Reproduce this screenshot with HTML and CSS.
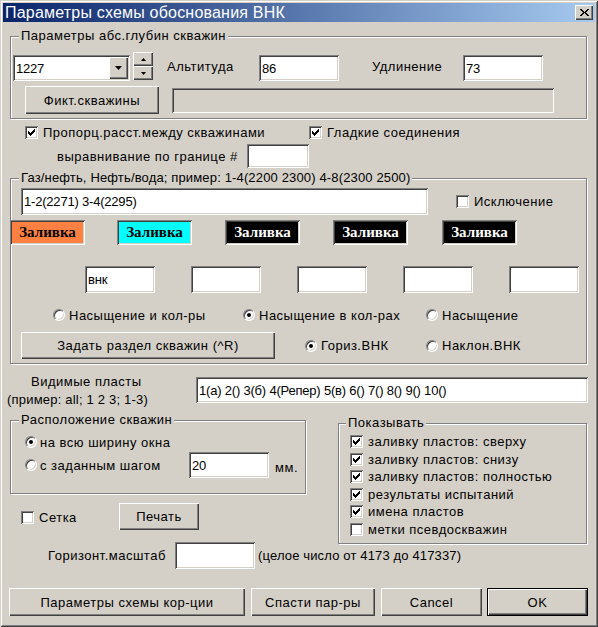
FILE: index.html
```html
<!DOCTYPE html>
<html>
<head>
<meta charset="utf-8">
<link rel="stylesheet" href="styles.css">
</head>
<body>
<div class="window">
  <div class="titlebar">
    <span class="title">Параметры схемы обоснования ВНК</span>
    <div class="btn close"><svg width="9" height="7" viewBox="0 0 9 7"><path d="M0 0h2v1H0zM7 0h2v1H7zM1 1h2v1H1zM6 1h2v1H6zM2 2h2v1H2zM5 2h2v1H5zM3 3h3v1H3zM2 4h2v1H2zM5 4h2v1H5zM1 5h2v1H1zM6 5h2v1H6zM0 6h2v1H0zM7 6h2v1H7z" fill="#000"/></svg></div>
  </div>
  <div class="client">
    <div class="group g1">
      <div class="legend">Параметры абс.глубин скважин</div>
      <div class="r1">
        <div class="edit combo"><span>1227</span><div class="btn dd"><svg width="7" height="4" viewBox="0 0 7 4"><path d="M0 0h7L3.5 4z" fill="#000"/></svg></div></div>
        <div class="spin">
          <div class="btn sp"><svg width="5" height="3" viewBox="0 0 5 3"><path d="M0 3h5L2.5 0z" fill="#000"/></svg></div>
          <div class="btn sp"><svg width="5" height="3" viewBox="0 0 5 3"><path d="M0 0h5L2.5 3z" fill="#000"/></svg></div>
        </div>
        <span class="lbl l-alt">Альтитуда</span>
        <div class="edit e-alt">86</div>
        <span class="lbl l-udl">Удлинение</span>
        <div class="edit e-udl">73</div>
      </div>
      <div class="r2">
        <div class="btn b-fict">Фикт.скважины</div>
        <div class="edit static"></div>
      </div>
    </div>

    <div class="chkrow">
      <div class="chk w-prop"><div class="cb"><svg width="13" height="13" viewBox="0 0 13 13"><path d="M3 5h1v3H3zM4 6h1v3H4zM5 7h1v3H5zM6 6h1v3H6zM7 5h1v3H7zM8 4h1v3H8zM9 3h1v3H9z" fill="#000"/></svg></div><span>Пропорц.расст.между скважинами</span></div>
      <div class="chk"><div class="cb"><svg width="13" height="13" viewBox="0 0 13 13"><path d="M3 5h1v3H3zM4 6h1v3H4zM5 7h1v3H5zM6 6h1v3H6zM7 5h1v3H7zM8 4h1v3H8zM9 3h1v3H9z" fill="#000"/></svg></div><span>Гладкие соединения</span></div>
    </div>

    <div class="alignrow">
      <span class="l-align">выравнивание по границе #</span>
      <div class="edit e-align"></div>
    </div>

    <div class="group g2">
      <div class="legend">Газ/нефть, Нефть/вода; пример: 1-4(2200 2300) 4-8(2300 2500)</div>
      <div class="g2a">
        <div class="edit e-gas">1-2(2271) 3-4(2295)</div>
        <div class="chk c-excl"><div class="cb"></div><span>Исключение</span></div>
      </div>
      <div class="g2b">
        <div class="fill f1">Заливка</div>
        <div class="fill f2">Заливка</div>
        <div class="fill f3">Заливка</div>
        <div class="fill f4">Заливка</div>
        <div class="fill f5">Заливка</div>
      </div>
      <div class="g2c">
        <div class="edit e-small first">внк</div>
        <div class="edit e-small"></div>
        <div class="edit e-small"></div>
        <div class="edit e-small"></div>
        <div class="edit e-small"></div>
      </div>
      <div class="g2d">
        <div class="rad w-r1"><div class="radio"></div><span>Насыщение и кол-ры</span></div>
        <div class="rad w-r2"><div class="radio"><i class="dot"></i></div><span>Насыщение в кол-рах</span></div>
        <div class="rad"><div class="radio"></div><span>Насыщение</span></div>
      </div>
      <div class="g2e">
        <div class="btn b-razdel">Задать раздел скважин (^R)</div>
        <div class="rad w-r4"><div class="radio"><i class="dot"></i></div><span>Гориз.ВНК</span></div>
        <div class="rad"><div class="radio"></div><span>Наклон.ВНК</span></div>
      </div>
    </div>

    <div class="vis">
      <div class="vis-l">
        <div class="vis-1">Видимые пласты</div>
        <div class="vis-2">(пример: all; 1 2 3; 1-3)</div>
      </div>
      <div class="edit vis-edit">1(а) 2() 3(б) 4(Репер) 5(в) 6() 7() 8() 9() 10()</div>
    </div>

    <div class="lower">
      <div class="lower-l">
        <div class="group g3">
          <div class="legend">Расположение скважин</div>
          <div class="g3a">
            <div class="rad r-g3"><div class="radio"><i class="dot"></i></div><span>на всю ширину окна</span></div>
          </div>
          <div class="g3b">
            <div class="rad r-g3 w-r5"><div class="radio"></div><span>с заданным шагом</span></div>
            <div class="edit e-step">20</div>
            <span class="mm">мм.</span>
          </div>
        </div>
        <div class="setka">
          <div class="chk w-setka"><div class="cb"></div><span>Сетка</span></div>
          <div class="btn b-print">Печать</div>
        </div>
      </div>
      <div class="group g4">
        <div class="legend">Показывать</div>
        <div class="g4list">
          <div class="chk g4row"><div class="cb"><svg width="13" height="13" viewBox="0 0 13 13"><path d="M3 5h1v3H3zM4 6h1v3H4zM5 7h1v3H5zM6 6h1v3H6zM7 5h1v3H7zM8 4h1v3H8zM9 3h1v3H9z" fill="#000"/></svg></div><span>заливку пластов: сверху</span></div>
          <div class="chk g4row"><div class="cb"><svg width="13" height="13" viewBox="0 0 13 13"><path d="M3 5h1v3H3zM4 6h1v3H4zM5 7h1v3H5zM6 6h1v3H6zM7 5h1v3H7zM8 4h1v3H8zM9 3h1v3H9z" fill="#000"/></svg></div><span>заливку пластов: снизу</span></div>
          <div class="chk g4row"><div class="cb"><svg width="13" height="13" viewBox="0 0 13 13"><path d="M3 5h1v3H3zM4 6h1v3H4zM5 7h1v3H5zM6 6h1v3H6zM7 5h1v3H7zM8 4h1v3H8zM9 3h1v3H9z" fill="#000"/></svg></div><span>заливку пластов: полностью</span></div>
          <div class="chk g4row"><div class="cb"><svg width="13" height="13" viewBox="0 0 13 13"><path d="M3 5h1v3H3zM4 6h1v3H4zM5 7h1v3H5zM6 6h1v3H6zM7 5h1v3H7zM8 4h1v3H8zM9 3h1v3H9z" fill="#000"/></svg></div><span>результаты испытаний</span></div>
          <div class="chk g4row"><div class="cb"><svg width="13" height="13" viewBox="0 0 13 13"><path d="M3 5h1v3H3zM4 6h1v3H4zM5 7h1v3H5zM6 6h1v3H6zM7 5h1v3H7zM8 4h1v3H8zM9 3h1v3H9z" fill="#000"/></svg></div><span>имена пластов</span></div>
          <div class="chk g4row"><div class="cb"></div><span>метки псевдоскважин</span></div>
        </div>
      </div>
    </div>

    <div class="scale">
      <span class="l-scale">Горизонт.масштаб</span>
      <div class="edit e-scale"></div>
      <span class="l-range">(целое число от 4173 до 417337)</span>
    </div>

    <div class="buttons">
      <div class="btn b1">Параметры схемы кор-ции</div>
      <div class="btn b2">Спасти пар-ры</div>
      <div class="btn b3">Cancel</div>
      <div class="btn b4 ok">OK</div>
    </div>
  </div>
</div>
</body>
</html>
```

FILE: styles.css
```css
* { box-sizing: border-box; }
html, body { margin: 0; padding: 0; background: #D4D0C8; }
body {
  font-family: "Liberation Sans", Arial, sans-serif;
  font-size: 13px;
  letter-spacing: 0.5px;
  color: #000;
}

.window {
  width: 598px;
  height: 627px;
  padding: 3px;
  background: #D4D0C8;
  box-shadow: inset 1px 1px #D4D0C8, inset -1px -1px #404040, inset 2px 2px #fff, inset -2px -2px #808080;
}

.titlebar {
  height: 19px;
  display: flex;
  align-items: center;
  padding-left: 2px;
  background: linear-gradient(to right, #0A246A, #A6CAF0);
  color: #fff;
}
.title { flex: 1; font-size: 16px; letter-spacing: 0.2px; line-height: 19px; white-space: nowrap; }
.close { width: 18px; height: 15px; margin-right: 2px; }

/* basic controls */
.btn {
  background: #D4D0C8;
  display: flex;
  align-items: center;
  justify-content: center;
  box-shadow: inset 1px 1px #fff, inset -1px -1px #404040, inset -2px -2px #808080;
  white-space: nowrap;
}
.edit {
  background: #fff;
  display: flex;
  align-items: center;
  padding-left: 3px;
  box-shadow: inset 1px 1px #808080, inset -1px -1px #fff, inset 2px 2px #404040, inset -2px -2px #D4D0C8;
  white-space: nowrap;
  overflow: hidden;
  letter-spacing: -0.2px;
}
.cb {
  width: 13px;
  height: 13px;
  flex: none;
  background: #fff;
  box-shadow: inset 1px 1px #808080, inset -1px -1px #fff, inset 2px 2px #404040, inset -2px -2px #D4D0C8;
}
.cb svg { display: block; }
.chk { display: flex; align-items: center; gap: 5px; white-space: nowrap; }
.rad { display: flex; align-items: center; gap: 4px; white-space: nowrap; }
.radio {
  width: 12px;
  height: 12px;
  flex: none;
  border-radius: 50%;
  background: #fff;
  border: 1px solid;
  border-color: #808080 #fff #fff #808080;
  box-shadow: inset 1px 1px #404040, inset -1px -1px #D4D0C8;
  display: flex;
  align-items: center;
  justify-content: center;
}
.dot { display: block; width: 4px; height: 4px; border-radius: 50%; background: #000; }

.group {
  border: 1px solid #808080;
  box-shadow: 1px 1px 0 #fff, inset 1px 1px 0 #fff;
}
.legend {
  width: max-content;
  height: 14px;
  line-height: 14px;
  margin: -8px 0 0 8px;
  padding: 0 2px;
  background: #D4D0C8;
  white-space: nowrap;
}

/* group 1 */
.g1 { margin: 14px 0 0 7px; width: 577px; height: 83px; }
.r1 { display: flex; align-items: flex-start; margin-top: 9px; height: 29px; }
.combo { margin: 3px 0 0 2px; width: 117px; height: 26px; padding: 0 2px 0 3px; justify-content: space-between; }
.dd { width: 19px; height: 22px; }
.dd svg { display: block; }
.spin { margin-left: 3px; width: 20px; height: 28px; display: flex; flex-direction: column; }
.sp { height: 14px; }
.sp svg { display: block; }
.lbl { line-height: 29px; white-space: nowrap; }
.l-alt { margin-left: 14px; width: 92px; }
.e-alt { margin-top: 3px; width: 80px; height: 26px; }
.l-udl { margin-left: 33px; width: 91px; }
.e-udl { margin-top: 3px; width: 80px; height: 26px; }
.r2 { display: flex; align-items: center; margin-top: 5px; height: 28px; }
.b-fict { margin-left: 14px; width: 134px; height: 28px; }
.static { margin-left: 13px; width: 382px; height: 25px; background: #D4D0C8; }

/* checkboxes row */
.chkrow { display: flex; align-items: center; margin: 6px 0 0 22px; height: 15px; }
.w-prop { width: 284px; }

.alignrow { display: flex; align-items: center; margin-top: 4px; height: 24px; }
.l-align { margin-left: 54px; width: 190px; white-space: nowrap; }
.e-align { width: 62px; height: 24px; }

/* group 2 */
.g2 { margin: 10px 0 0 7px; width: 577px; height: 186px; }
.g2 .legend { letter-spacing: 0.15px; }
.g2a { display: flex; align-items: center; margin-top: 3px; height: 27px; }
.e-gas { margin-left: 10px; width: 407px; height: 27px; }
.c-excl { margin-left: 28px; }
.g2b { display: flex; margin-top: 5px; height: 25px; }
.fill {
  width: 75px;
  height: 25px;
  display: flex;
  align-items: center;
  justify-content: center;
  font-family: "Liberation Serif", "DejaVu Serif", serif;
  font-weight: bold;
  font-size: 15px;
  letter-spacing: 0;
  box-shadow: inset 1px 1px #808080, inset -1px -1px #fff, inset 2px 2px #404040, inset -2px -2px #D4D0C8;
}
.f1 { margin-left: -1px; background: #FF8040; color: #000; }
.f2 { margin-left: 32px; background: #00FFFF; color: #000; }
.f3 { margin-left: 33px; background: #000; color: #fff; }
.f4 { margin-left: 33px; background: #000; color: #fff; }
.f5 { margin-left: 34px; background: #000; color: #fff; }
.g2c { display: flex; margin-top: 21px; height: 27px; }
.e-small { margin-left: 36px; width: 70px; height: 27px; }
.e-small.first { margin-left: 74px; }
.g2d { display: flex; align-items: center; margin-top: 14px; height: 16px; }
.w-r1 { margin-left: 42px; width: 190px; }
.w-r2 { width: 183px; }
.g2e { display: flex; align-items: center; margin-top: 9px; height: 27px; }
.b-razdel { margin-left: 10px; width: 254px; height: 27px; }
.w-r4 { margin-left: 30px; width: 121px; }

/* visible layers */
.vis { display: flex; align-items: flex-start; margin-top: 9px; }
.vis-l { width: 193px; }
.vis-1 { line-height: 18px; padding-left: 28px; white-space: nowrap; }
.vis-2 { line-height: 18px; padding-left: 4px; white-space: nowrap; letter-spacing: 0.2px; }
.vis-edit { margin-top: 4px; width: 392px; height: 26px; }

/* lower area */
.lower { display: flex; align-items: flex-start; }
.lower-l { width: 303px; }
.g3 { margin: 11px 0 0 7px; width: 296px; height: 74px; }
.g3a { display: flex; align-items: center; margin-top: 7px; height: 16px; }
.r-g3 { margin-left: 14px; gap: 3px; }
.g3b { display: flex; align-items: center; margin-top: 2px; height: 26px; }
.w-r5 { width: 164px; }
.e-step { width: 80px; height: 26px; }
.mm { margin-left: 6px; padding-top: 4px; }
.setka { display: flex; align-items: center; margin-top: 9px; height: 27px; }
.w-setka { margin: 2px 0 0 18px; width: 98px; }
.b-print { width: 80px; height: 27px; }

.g4 { margin: 14px 0 0 32px; width: 249px; height: 121px; }
.g4 .legend { margin-left: 7px; }
.g4list { margin-top: 3px; }
.g4row { height: 17.5px; margin-left: 11px; }

/* scale */
.scale { display: flex; align-items: center; margin-top: -2px; height: 27px; }
.l-scale { margin-left: 45px; width: 127px; white-space: nowrap; }
.e-scale { width: 80px; height: 27px; }
.l-range { margin-left: 3px; white-space: nowrap; letter-spacing: 0.15px; }

/* bottom buttons */
.buttons { display: flex; margin-top: 19px; height: 28px; }
.buttons .btn { height: 28px; }
.b1 { margin-left: 6px; width: 236px; }
.b2 { margin-left: 6px; width: 124px; }
.b3 { margin-left: 6px; width: 101px; }
.b4 { margin-left: 5px; width: 101px; }
.ok { border: 1px solid #000; }
```
